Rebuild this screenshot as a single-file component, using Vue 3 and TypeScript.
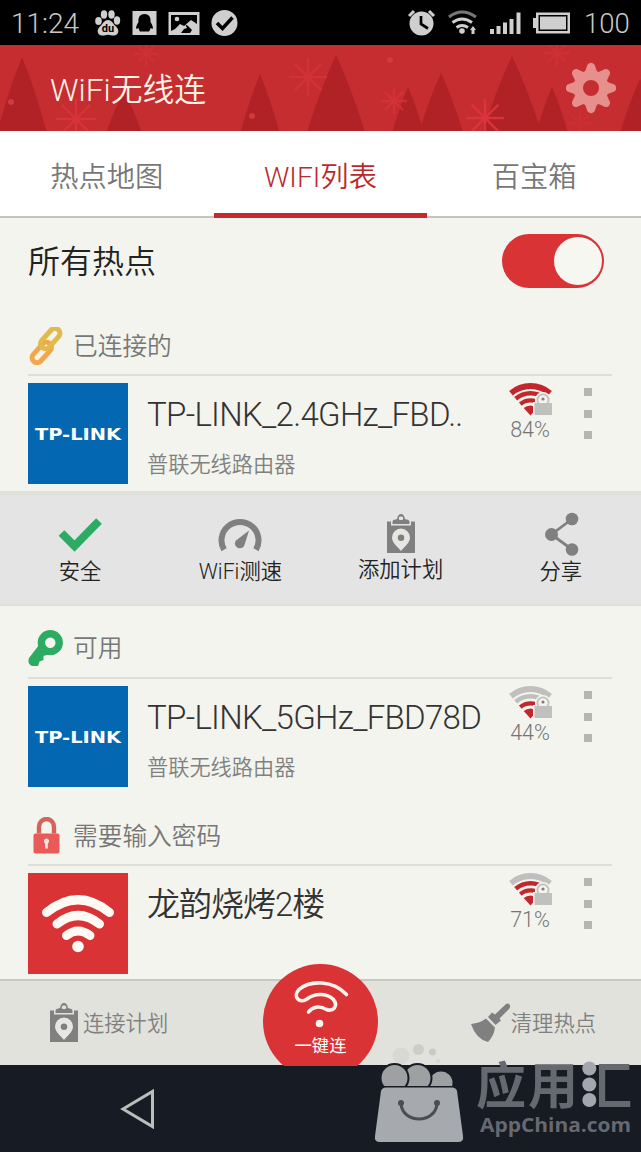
<script setup lang="ts">
interface Hotspot {
  name: string
  vendor: string
  percent: string
  level: number
  brand: 'tplink' | 'wifi'
}
interface Section {
  kind: 'linked' | 'open' | 'locked'
  title: string
  spot: Hotspot
  tools: boolean
}

const sections: Section[] = [
  { kind: 'linked', title: '已连接的', tools: true, spot: { name: 'TP-LINK_2.4GHz_FBD..', vendor: '普联无线路由器', percent: '84%', level: 4, brand: 'tplink' } },
  { kind: 'open', title: '可用', tools: false, spot: { name: 'TP-LINK_5GHz_FBD78D', vendor: '普联无线路由器', percent: '44%', level: 2, brand: 'tplink' } },
  { kind: 'locked', title: '需要输入密码', tools: false, spot: { name: '龙韵烧烤2楼', vendor: '', percent: '71%', level: 3, brand: 'wifi' } },
]

const trees = [
  [22, 12, 25, 76], [124, 46, 18, 42], [260, 29, 20, 60], [336, 10, 30, 80],
  [408, 42, 16, 46], [441, 28, 23, 62], [512, 11, 30, 78], [552, 42, 16, 46], [640, 34, 20, 54],
]
const flakes = [
  [76, 74, 20, 0.75], [308, 32, 19, 0.6], [146, 9, 12, 0.4], [394, 56, 13, 0.6], [485, 73, 19, 0.9], [557, 8, 13, 0.4], [580, 78, 12, 0.25],
]
const dots = [[11, 57], [252, 71], [390, 15]]
const spokes = [0, 45, 90, 135]
const teeth = [0, 45, 90, 135, 180, 225, 270, 315]
const arcs = [
  { d: 'M11.3 21.100A15.700 15.700 0 0 1 31.700 21.100', w: 4.2, at: 2 },
  { d: 'M6.700 15.700A22.700 22.700 0 0 1 36.300 15.700', w: 4.6, at: 3 },
  { d: 'M2 10.200A30 30 0 0 1 41 10.200', w: 5.8, at: 4 },
]
</script>

<template>
  <div class="phone">
    <div class="status">
      <span class="clock">11:24</span>
      <svg class="s-left" width="146" height="30" viewBox="0 0 146 30">
        <g fill="#cfcfcf">
          <ellipse cx="4.500" cy="13" rx="3.300" ry="4.100" />
          <ellipse cx="10" cy="6.500" rx="3.200" ry="4.200" />
          <ellipse cx="17.500" cy="6.500" rx="3.200" ry="4.200" />
          <ellipse cx="23" cy="12.500" rx="3.200" ry="4.200" />
          <path d="M14 12c4 0 5 4 8 6.500 4 3.500 2.500 9-2 9-3 0-4-.8-6-.8s-3 .8-6 .8c-4.500 0-6-5.500-2-9 3-2.500 4-6.500 8-6.500z" />
          <rect x="38.500" y="3" width="24" height="24" />
          <path d="M74.500 4h31v23h-31z" />
          <circle cx="130.500" cy="15" r="13" />
        </g>
        <text x="14" y="24" class="du">du</text>
        <path d="M50.500 6c-5 0-6.500 4-6 8-2 3-3 6-2 7l2-1c.5 2 1 3 1.500 3.500h9c.5-.5 1-1.500 1.500-3.500l2 1c1-1 0-4-2-7 .5-4-1-8-6-8z" fill="#000" />
        <path d="M77 7h26v9l-6-4-7 6-4-2-5 5-4 2z" fill="#000" />
        <circle cx="83" cy="11" r="2.300" fill="#cfcfcf" />
        <path d="M87 25l3-4 3-1-2-4 3 2 4 4-2 3z" fill="#000" />
        <path d="M123 15l5.500 5.500L138.500 9.500" fill="none" stroke="#000" stroke-width="3.500" />
      </svg>
      <svg class="s-right" width="164" height="30" viewBox="0 0 164 30">
        <g fill="#cfcfcf" transform="translate(0 -1)">
          <circle cx="13.500" cy="16.500" r="12" />
          <path d="M13 9v8l7 4.500" fill="none" stroke="#000" stroke-width="2.700" />
          <path d="M1 9l5-5M21 4l5 5" fill="none" stroke="#cfcfcf" stroke-width="3" />
          <g fill="none" stroke="#cfcfcf" stroke-width="3">
            <path d="M41 10Q54 0 68 10" stroke="#777" />
            <path d="M44.500 15.500Q54 8.500 64 15.500" />
            <path d="M48.500 20.500Q54 16.500 60 20.500" />
          </g>
          <circle cx="54" cy="24" r="2.800" />
          <path d="M65 19l3 4h-1.500v4h-3v-4H62z" />
          <path d="M82 22h4v5h-4zM88.500 19h4v8h-4zM95 15.500h4V27h-4zM101.500 12h4v15h-4zM108.500 5.500h4V27h-4z" />
          <path d="M128 5.500h34v21h-34v-5.500h-3v-10h3z" />
          <path d="M130.500 8h29v16h-29z" fill="#000" />
          <path d="M132 9.500h26v13h-26z" />
        </g>
      </svg>
      <span class="battery">100</span>
    </div>

    <header class="bar">
      <svg class="forest" width="641" height="86" viewBox="0 0 641 86">
        <path
          v-for="(t, i) in trees" :key="'t' + i" fill="#b12226"
          :d="`M${t[0]} ${t[1]}Q${t[0] + t[2] * 0.5} ${t[1] + t[3] * 0.4} ${t[0] + t[2]} ${t[1] + t[3]}H${t[0] - t[2]}Q${t[0] - t[2] * 0.5} ${t[1] + t[3] * 0.4} ${t[0]} ${t[1]}Z`"
        />
        <g v-for="(f, i) in flakes" :key="'f' + i" stroke="#dd3540" stroke-width="2.500" :opacity="f[3]">
          <line
            v-for="a in spokes" :key="a" :x1="f[0] - f[2]" :x2="f[0] + f[2]" :y1="f[1]" :y2="f[1]"
            :transform="`rotate(${a} ${f[0]} ${f[1]})`"
          />
          <circle :cx="f[0]" :cy="f[1]" :r="f[2] / 5" fill="#dd3540" stroke="none" />
        </g>
        <circle v-for="(d, i) in dots" :key="'d' + i" :cx="d[0]" :cy="d[1]" r="3" fill="#d23a3e" />
      </svg>
      <h1>WiFi无线连</h1>
      <svg class="gear" width="50" height="52" viewBox="-25 -26 50 52">
        <g fill="#e68f8c">
          <path v-for="a in teeth" :key="a" d="M-6.500-15L-3.500-23.500Q0-27 3.500-23.500L6.500-15Z" :transform="`rotate(${a})`" />
          <path fill-rule="evenodd" d="M0-17.800A17.800 17.800 0 1 1 0 17.800A17.800 17.800 0 1 1 0-17.800ZM0-8A8 8 0 1 0 0 8A8 8 0 1 0 0-8Z" />
        </g>
      </svg>
    </header>

    <nav class="tabs">
      <div class="tab"><span>热点地图</span></div>
      <div class="tab on"><span>WIFI列表</span></div>
      <div class="tab"><span>百宝箱</span></div>
    </nav>

    <main class="content">
      <div class="all">
        <span>所有热点</span>
        <div class="switch"><i></i></div>
      </div>

      <section v-for="s in sections" :key="s.kind">
        <div class="sec-head" :class="s.kind">
          <svg class="sec-icon" width="36" height="38" viewBox="0 0 36 38">
            <g v-if="s.kind === 'linked'" fill="none" stroke-width="5" transform="translate(18 18.500) rotate(-48)">
              <rect x="-20" y="-3.500" width="24" height="10" rx="5" stroke="#f2a74b" />
              <rect x="-4" y="-6.500" width="24" height="10" rx="5" stroke="#e3b84c" />
            </g>
            <g v-else-if="s.kind === 'open'">
              <path d="M11 16L1 29Q-1 35 4 37H10L11.500 32.500L15.500 31V27L20 25.500L24 20Z" fill="#2dab63" />
              <circle cx="22.300" cy="13.700" r="8.900" fill="#f3f4ed" stroke="#2dab63" stroke-width="7.400" />
            </g>
            <g v-else>
              <path d="M11 17V10.500a7.500 8 0 0 1 15 0V17" transform="translate(0 -.5)" fill="none" stroke="#d4635d" stroke-width="4.400" />
              <rect x="5.500" y="16.500" width="26" height="20" rx="2" fill="#ea5a58" />
              <path d="M18.500 21.500a2.700 2.700 0 0 1 1.300 5v5h-2.600v-5a2.700 2.700 0 0 1 1.300-5z" fill="#f8e8e0" />
            </g>
          </svg>
          <span>{{ s.title }}</span>
        </div>

        <div class="item">
          <div class="logo" :class="s.spot.brand">
            <svg width="100" height="101" viewBox="0 0 100 101">
              <text v-if="s.spot.brand === 'tplink'" class="brand" x="7" y="56.500" textLength="86" lengthAdjust="spacingAndGlyphs">TP-LINK</text>
              <g v-else fill="none" stroke="#fffaf4" stroke-linecap="round">
                <path d="M18.500 39.500Q50 14 81.500 39.500" stroke-width="9" />
                <path d="M29 51Q50 34 71.500 51" stroke-width="9" />
                <path d="M38.500 62.500Q50 53.500 62 62.500" stroke-width="9" />
                <circle cx="50" cy="73.500" r="5.800" fill="#fffaf4" stroke="none" />
              </g>
            </svg>
          </div>
          <div class="info">
            <div class="name" :class="s.kind">{{ s.spot.name }}</div>
            <div class="vendor">{{ s.spot.vendor }}</div>
          </div>
          <div class="signal">
            <svg width="43" height="34" viewBox="0 0 43 34">
              <path d="M21.500 32.500L14.700 25A10.500 10.500 0 0 1 28.300 25Z" fill="#c4262d" />
              <path
                v-for="a in arcs" :key="a.at" :d="a.d" fill="none" :stroke-width="a.w"
                :stroke="a.at <= s.spot.level ? '#c4262d' : '#bfbfbd'"
              />
              <path d="M24 34V19h2v-2a8 8 0 0 1 16 0v2h1v15z" fill="#f3f4ed" />
              <circle cx="34" cy="17" r="5.600" fill="#f3f4ed" stroke="#c0c0be" stroke-width="1.800" />
              <path d="M25.500 32V20H43V32z" fill="#c0c0be" />
              <circle cx="34" cy="16" r="1.600" fill="#8a7a78" />
            </svg>
            <span>{{ s.spot.percent }}</span>
          </div>
          <div class="more"><i></i><i></i><i></i></div>
        </div>

        <div v-if="s.tools" class="tools">
          <div class="tool">
            <svg width="46" height="44" viewBox="0 0 46 44"><path d="M4.500 21L17.500 34L42 9" fill="none" stroke="#2dab63" stroke-width="8" /></svg>
            <span>安全</span>
          </div>
          <div class="tool">
            <svg width="46" height="44" viewBox="0 0 46 44">
              <path d="M7 38.500A18.500 18.500 0 1 1 39 38.500" transform="translate(0 -.8)" fill="none" stroke="#808080" stroke-width="6" />
              <path d="M32 18.500L19 28.500Q16 33 21 36Q26 37 27.500 33Z" fill="#808080" />
            </svg>
            <span>WiFi测速</span>
          </div>
          <div class="tool plan">
            <svg width="28" height="40" viewBox="0 0 28 40"><use href="#clip" /></svg>
            <span>添加计划</span>
          </div>
          <div class="tool">
            <svg width="46" height="44" viewBox="0 0 46 44">
              <g fill="#808080"><circle cx="13.500" cy="22.500" r="6.500" /><circle cx="34" cy="7" r="6.300" /><circle cx="34" cy="37.500" r="6.300" /></g>
              <path d="M34 7L13.500 22.500L34 37.500" fill="none" stroke="#808080" stroke-width="2.800" />
            </svg>
            <span>分享</span>
          </div>
        </div>
      </section>
    </main>

    <footer class="bottom">
      <div class="b-item left">
        <svg width="28" height="40" viewBox="0 0 28 40">
          <defs>
            <g id="clip">
              <path d="M0 7.500H4V11.500H24V7.500H28V39H0Z" fill="#808080" />
              <path fill-rule="evenodd" d="M5.500 10V8Q5.500 5.500 8.500 5.500L10 5Q11 0 14 0Q17 0 18 5L19.500 5.500Q22.500 5.500 22.500 8V10ZM14 2.500A1.800 1.800 0 1 0 14 6A1.800 1.800 0 1 0 14 2.500Z" fill="#808080" />
              <path fill-rule="evenodd" d="M14 14.500A9 9 0 0 1 23 23.500C23 29 17 33 14 37C11 33 5 29 5 23.500A9 9 0 0 1 14 14.500ZM14 20.500A3.200 3.200 0 1 0 14 27A3.200 3.200 0 1 0 14 20.500Z" fill="#e6e6e3" />
            </g>
          </defs>
          <use href="#clip" />
        </svg>
        <span>连接计划</span>
      </div>
      <div class="connect">
        <svg width="58" height="58" viewBox="0 0 58 58">
          <path
            d="M54.500 19.500C41 5 18 5 7 14.500C0 22 8 29 15 24C23 18 34 18 41 24C47 31 41 37 34.500 34.500C27 30 20 32 16.500 37"
            fill="none" stroke="#fff3ec" stroke-width="3.600" stroke-linecap="round"
          />
          <circle cx="27.500" cy="48.500" r="3.800" fill="#fff3ec" />
        </svg>
        <span>一键连</span>
      </div>
      <div class="b-item right">
        <svg width="40" height="40" viewBox="0 0 40 40" fill="#808080">
          <path d="M34.500 1.500Q37-.5 38.500 1.500Q40 4 38 6L28.500 15.500L30 17.500L24.500 22L17 14L21 9.500L24 11.500Z" />
          <path d="M15 15.500L24 24.500Q23 33 17 39Q5 36 0 21Q9 20 15 15.500Z" />
        </svg>
        <span>清理热点</span>
      </div>
    </footer>

    <div class="system">
      <svg class="back" width="36" height="44" viewBox="0 0 36 44"><path d="M4 22L33.500 4.500V39.500Z" fill="none" stroke="#bcbcbc" stroke-width="3" /></svg>
    </div>

    <div class="mark">
      <svg width="276" height="117" viewBox="0 0 276 117">
        <circle cx="36" cy="21" r="8.500" fill="#d8d9d4" />
        <circle cx="53.500" cy="14.500" r="5.500" fill="#cccdc9" />
        <circle cx="67.500" cy="17" r="3.500" fill="#c9cac6" />
        <circle cx="73" cy="26" r="2" fill="#d5d6d1" />
        <g fill="#9fa0a2" stroke="#171b24" stroke-width="2">
          <circle cx="76" cy="48" r="12.500" /><circle cx="52.500" cy="43" r="14" /><circle cx="29.500" cy="43" r="14" />
        </g>
        <path d="M14 51H94V56H14Z" fill="#171b24" />
        <path d="M21 52.500H87Q91 52.500 92 56L98 101Q99 107 93 107H15Q9 107 10 101L16 56Q17 52.500 21 52.500Z" fill="#a6a9ae" />
        <path d="M36 69C38 89 70 89 72 69" fill="none" stroke="#4b4d51" stroke-width="3" />
        <circle cx="36" cy="68" r="3" fill="#4b4d51" /><circle cx="72" cy="68" r="3" fill="#4b4d51" />
        <text class="cn" x="111" y="69">应</text>
        <text class="cn" x="163" y="69">用</text>
        <text class="cn hui" x="217" y="69">汇</text>
        <g fill="#a3a6ae"><circle cx="224.300" cy="33.500" r="7" /><circle cx="224.300" cy="49.500" r="7" /><circle cx="224.300" cy="65" r="7" /></g>
        <text class="en" x="115" y="96.500" textLength="151" lengthAdjust="spacingAndGlyphs">AppChina.com</text>
      </svg>
    </div>
  </div>
</template>

<style>
body { margin: 0; }
</style>

<style scoped>
.phone { position: relative; width: 641px; height: 1152px; overflow: hidden; background: #f3f4ed; font-family: Roboto, "Noto Sans CJK SC", sans-serif; font-weight: 350; color: #333; display: flex; flex-direction: column; }
svg { display: block; flex: none; }
span { white-space: nowrap; }
.status { height: 45px; flex: none; background: #000; display: flex; align-items: center; color: #c9c9c9; font-size: 28px; font-weight: 300; box-sizing: border-box; padding: 0 11px; }
.clock { width: 83px; padding-top: 2px; }
.du { font: 700 11px Roboto, sans-serif; text-anchor: middle; fill: #000; }
.s-right { margin-left: auto; margin-right: 12px; }
.battery { font-size: 27.500px; width: 46px; padding-top: 2px; }
.bar { position: relative; height: 86px; flex: none; background: #c52d31; display: flex; align-items: center; justify-content: space-between; padding: 0 25px 0 50px; }
.forest { position: absolute; left: 0; top: 0; }
h1 { position: relative; margin: 0; font-size: 31.800px; font-weight: 350; color: #fff3e6; line-height: 86px; padding-top: 3px; }
.gear { position: relative; }
.tabs { height: 87px; flex: none; box-sizing: border-box; background: #fff; border-bottom: 2px solid #c3c3bf; display: grid; grid-template-columns: repeat(3, 1fr); font-size: 28.300px; color: #777; }
.tab { height: 87px; display: flex; align-items: center; justify-content: center; box-sizing: border-box; border-bottom: 5px solid transparent; padding-top: 4px; }
.tab.on { color: #b82a2e; border-bottom-color: #c5282e; }
.content { height: 761px; flex: none; overflow: hidden; }
.all { height: 109px; box-sizing: border-box; padding: 16px 37px 0 28px; display: flex; justify-content: space-between; align-items: flex-start; font-size: 32px; line-height: 56px; color: #222; }
.switch { width: 102px; height: 54px; border-radius: 27px; background: #d93336; display: flex; justify-content: flex-end; padding: 3px 2px; box-sizing: border-box; }
.switch i { width: 48px; height: 48px; border-radius: 50%; background: #f7f7f2; }
.sec-head { height: 49px; margin: 0 29px 7px 28px; box-sizing: border-box; border-bottom: 2px solid #dededa; display: flex; align-items: flex-start; gap: 9px; font-size: 24.700px; line-height: 39px; color: #777; }
.sec-head.open { margin-top: 23px; height: 50px; }
.sec-head.locked { margin-top: 30px; height: 49px; }
.item { height: 101px; margin-left: 28px; display: flex; }
.logo { width: 100px; height: 101px; flex: none; background: #0467b1; }
.logo.wifi { background: #d93336; }
.brand { font: 700 16px "DejaVu Sans", sans-serif; fill: #fff; }
.info { width: 361px; flex: none; margin-left: 19px; }
.name { margin-top: 11px; font-size: 33px; line-height: 42px; letter-spacing: -0.7px; white-space: nowrap; color: #333; }
.name.locked { letter-spacing: -1px; }
.vendor { margin-top: 13px; font-size: 21.200px; line-height: 32px; color: #808080; }
.signal { width: 44px; display: flex; flex-direction: column; align-items: center; font-size: 21.500px; font-weight: 300; line-height: 26px; color: #757575; }
.more { margin: 5px 0 0 32px; display: flex; flex-direction: column; gap: 13.500px; }
.more i { width: 8px; height: 8px; background: #b5b5b2; }
.tools { margin-top: 7px; height: 115px; box-sizing: border-box; border-top: 4px solid #e1e1db; border-bottom: 2px solid #dfdfdb; background: #e4e4e4; display: grid; grid-template-columns: repeat(4, 1fr); font-size: 21.300px; line-height: 31px; color: #222; }
.tool { display: flex; flex-direction: column; align-items: center; padding-top: 17px; }
.plan { padding-top: 19px; }
.bottom { position: relative; height: 86px; flex: none; box-sizing: border-box; border-top: 2px solid #c8c8c4; background: #e1e2dc; display: flex; justify-content: space-between; align-items: center; padding: 0 45px 0 50px; font-size: 21.300px; color: #808080; }
.b-item { display: flex; align-items: center; gap: 5px; }
.b-item span { padding-bottom: 3px; }
.right { gap: 0; }
.connect { position: absolute; left: 263px; top: -17px; width: 115px; height: 115px; box-sizing: border-box; padding-top: 11px; border-radius: 50%; clip-path: inset(0 0 13px 0); background: #d93336; color: #fff; font-size: 17.300px; line-height: 26px; font-weight: 400; display: flex; flex-direction: column; align-items: center; }
.system { height: 87px; flex: none; background: #171b24; display: flex; align-items: center; }
.back { margin-left: 119px; }
.mark { position: absolute; left: 365px; top: 1035px; }
.cn { font: 700 50px "Noto Sans CJK SC", sans-serif; fill: #666970; }
.hui { clip-path: inset(0 0 0 17px); }
.en { font: 700 20px "Open Sans", sans-serif; fill: #666970; }
</style>
